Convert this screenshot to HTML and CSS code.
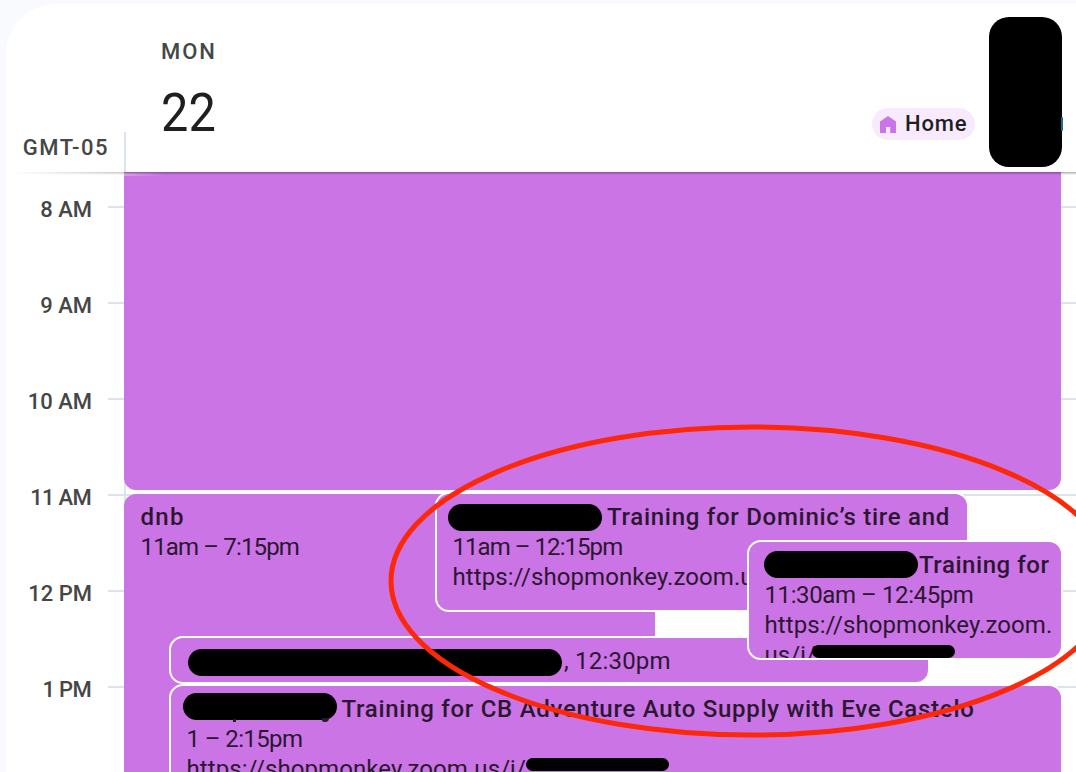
FILE: index.html
```html
<!DOCTYPE html>
<html lang="en">
<head>
    <meta charset="UTF-8">
    <meta name="viewport" content="width=device-width, initial-scale=1.0">
    <title>Calendar</title>
    <link rel="stylesheet" href="styles.css">
</head>
<body>

    <div class="calendar">
        <div class="header">
            <div class="timezone">GMT-05</div>
            <div class="day">
                <div class="day-name">MON</div>
                <div class="day-number">22</div>
            </div>
            <div class="location">
                <svg class="home-icon" viewBox="0 0 16 17"><path d="M0 17V5.5L8 0l8 5.5V17h-5.8v-6H6v6z"/></svg>
                <span>Home</span>
            </div>
            <div class="avatar"></div>
        </div>

        <div class="grid">
            <div class="hours">
                <div class="hour">8 AM</div>
                <div class="hour">9 AM</div>
                <div class="hour">10 AM</div>
                <div class="hour narrow">11 AM</div>
                <div class="hour">12 PM</div>
                <div class="hour narrow">1 PM</div>
            </div>
            <div class="column">
                <div class="event base morning"></div>
                <div class="event base dnb">
                    <div class="title">dnb</div>
                    <div class="time">11am – 7:15pm</div>
                </div>
                <div class="event dominic">
                    <div class="title"><span class="redacted"></span>Training for Dominic’s tire and</div>
                    <div class="time">11am – 12:15pm</div>
                    <div class="link">https://shopmonkey.zoom.us</div>
                </div>
                <div class="event short">
                    <div class="time"><span class="redacted"></span>, 12:30pm</div>
                </div>
                <div class="event supply">
                    <div class="title"><span class="redacted"></span>Training for CB Adventure Auto Supply with Eve Castelo</div>
                    <div class="time">1 – 2:15pm</div>
                    <div class="link">https://shopmonkey.zoom.us/j/<span class="redacted thin"></span></div>
                </div>
                <div class="event late">
                    <div class="title"><span class="redacted"></span>Training for</div>
                    <div class="time">11:30am – 12:45pm</div>
                    <div class="link">https://shopmonkey.zoom.</div>
                    <div class="link">us/j/<span class="redacted thin"></span></div>
                </div>
            </div>
        </div>
    </div>

    <svg class="circle" viewBox="0 0 1076 772">
        <ellipse cx="751.5" cy="581" rx="360.5" ry="154"/>
    </svg>

</body>
</html>
```
FILE: styles.css
```css
        * {
            box-sizing: border-box;
        }

        body {
            margin: 0;
            height: 772px;
            overflow: hidden;
            background-color: #f8fafd;
            font-family: Roboto, "Liberation Sans", sans-serif;
            color: #1f1f1f;
        }

        .calendar {
            margin: 4px 0 0 6px;
            height: 768px;
            background-color: #fff;
            border-top-left-radius: 50px;
            overflow: hidden;
        }

        .header {
            display: flex;
            height: 168px;
            padding-right: 14px;
        }

        .timezone {
            width: 120px;
            height: 40px;
            margin-top: 128px;
            padding-right: 15px;
            border-right: 2px solid #dde3ea;
            font-size: 22px;
            font-weight: 500;
            line-height: 31px;
            letter-spacing: 1.5px;
            text-align: right;
            color: #444746;
            white-space: nowrap;
        }

        .day {
            flex: 1;
            padding: 35px 0 0 35px;
        }

        .day-name {
            font-size: 22px;
            font-weight: 500;
            line-height: 26px;
            letter-spacing: 1.9px;
            color: #444746;
        }

        .day-number {
            margin-top: 18px;
            font-size: 53px;
            line-height: 61px;
            transform: scaleX(0.92);
            transform-origin: left;
        }

        .location {
            display: flex;
            align-items: center;
            gap: 9px;
            width: 103px;
            height: 32px;
            margin-top: 104px;
            padding-left: 8px;
            border-radius: 16px;
            background-color: #f8eafd;
            font-size: 22px;
            font-weight: 500;
            line-height: 24px;
            letter-spacing: 0.8px;
        }

        .location span {
            margin-top: -1px;
        }

        .home-icon {
            width: 16px;
            height: 17px;
            fill: #cb74e6;
        }

        .avatar {
            position: relative;
            width: 73px;
            height: 150px;
            margin: 13px 0 0 14px;
            border-radius: 20px;
            background-color: #000;
        }

        .avatar::after {
            content: "";
            position: absolute;
            top: 100px;
            right: -1px;
            width: 2px;
            height: 14px;
            border-radius: 1px;
            background-color: #1a6f99;
        }

        .grid {
            position: relative;
            display: flex;
            height: 600px;
        }

        /* shadow under the header, fades out on the left */
        .grid::before {
            content: "";
            position: absolute;
            z-index: 5;
            top: 0;
            left: 0;
            right: 0;
            height: 3px;
            background: linear-gradient(rgba(0, 0, 0, 0.32), rgba(0, 0, 0, 0));
            -webkit-mask-image: linear-gradient(to right, transparent 5px, #000 160px);
            mask-image: linear-gradient(to right, transparent 5px, #000 160px);
        }

        .hours {
            width: 118px;
            padding-top: 34px;
        }

        .hour {
            height: 96px;
            padding-right: 32px;
            background: linear-gradient(#dde3ea, #dde3ea) right top / 16px 2px no-repeat;
            font-size: 22px;
            font-weight: 500;
            line-height: 7px;
            text-align: right;
            color: #444746;
        }

        .hour.narrow {
            padding-right: 33px;
            letter-spacing: -0.7px;
        }

        .column {
            position: relative;
            flex: 1;
            background:
                linear-gradient(#dde3ea, #dde3ea) left top / 2px 100% no-repeat,
                repeating-linear-gradient(transparent 0 34px, #dde3ea 34px 36px, transparent 36px 96px);
        }

        .event {
            position: absolute;
            padding: 8px 0 0 15.5px;
            border: 2px solid #fff;
            border-radius: 14px;
            background-color: #cb74e6;
            font-size: 24px;
            line-height: 30px;
            white-space: nowrap;
            overflow: hidden;
            color: #2b1731;
        }

        .event.base {
            border: none;
            border-radius: 12px;
            left: 0;
        }

        .title,
        .time,
        .link {
            display: flex;
            align-items: flex-start;
            height: 30px;
        }

        .title {
            font-weight: 500;
            letter-spacing: 0.72px;
        }

        .link {
            letter-spacing: 0.08px;
        }

        .morning {
            top: 0;
            width: 937px;
            height: 318px;
        }

        .event.morning {
            border-top-left-radius: 0;
            border-top-right-radius: 0;
        }

        .morning::before {
            content: "";
            position: absolute;
            top: 1px;
            left: 0;
            width: 40px;
            height: 3px;
            background: linear-gradient(to right, rgba(255, 255, 255, 0.3), rgba(255, 255, 255, 0));
        }

        .event.dnb {
            top: 322px;
            width: 531px;
            height: 400px;
            padding-left: 16.5px;
        }

        .dnb .title {
            letter-spacing: 1.3px;
        }

        .dnb .time {
            letter-spacing: -0.85px;
        }

        .dominic {
            top: 320px;
            left: 311px;
            width: 534px;
            height: 120px;
        }

        .dominic .time {
            letter-spacing: -0.95px;
        }

        .short {
            top: 464px;
            left: 45px;
            width: 761px;
            height: 48px;
        }

        .short .time {
            letter-spacing: 0.2px;
        }

        .supply {
            top: 512px;
            left: 45px;
            width: 894px;
            height: 120px;
        }

        .supply .time {
            letter-spacing: -0.6px;
        }

        .late {
            top: 368px;
            left: 623px;
            width: 316px;
            height: 120px;
        }

        .late .title {
            letter-spacing: 0.55px;
        }

        .late .time {
            letter-spacing: -0.4px;
        }

        .redacted {
            flex: none;
            width: 154px;
            height: 27px;
            border-radius: 14px;
            background-color: #000;
        }

        .dominic .redacted {
            margin: 2px 5px 0 -4.5px;
        }

        .short .redacted {
            width: 374px;
            margin: 3px 2px 0 1.5px;
        }

        .supply .title .redacted {
            position: relative;
            margin: -1px 4.5px 0 -3.5px;
        }

        /* descenders left showing below the marker */
        .supply .title .redacted::before,
        .supply .title .redacted::after {
            content: "";
            position: absolute;
            top: 26px;
            left: 50px;
            width: 3px;
            height: 3px;
            background-color: #2b1731;
        }

        .supply .title .redacted::after {
            top: 25px;
            left: 139px;
            width: 7px;
            height: 4px;
            border-radius: 0 0 4px 2px;
        }

        .late .title .redacted {
            margin: 1px 1px 0 -0.5px;
        }

        .link .redacted.thin {
            width: 143px;
            height: 13px;
            margin-top: 4px;
            border-radius: 7px;
        }

        .late .link .redacted.thin {
            margin: 5px 0 0 -4.5px;
        }

        .circle {
            position: absolute;
            top: 0;
            left: 0;
            width: 1076px;
            height: 772px;
            fill: none;
            stroke: #fc2808;
            stroke-width: 5px;
        }
```
